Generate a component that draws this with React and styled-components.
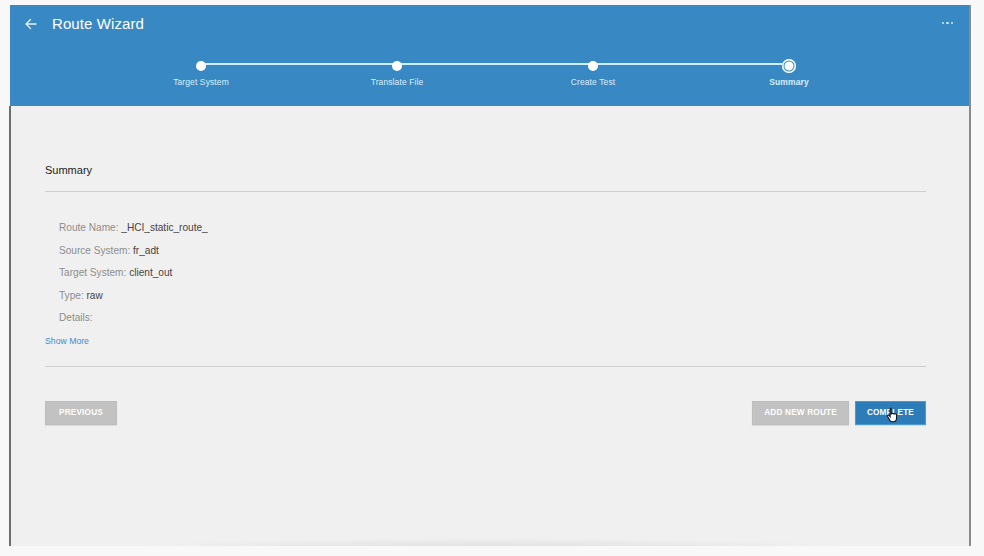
import React from "react";
import styled, { createGlobalStyle } from "styled-components";

const Global = createGlobalStyle`
  html, body { margin: 0; padding: 0; background: #f8f8f8; }
  body { font-family: "Liberation Sans", Arial, sans-serif; }
  * { box-sizing: border-box; }
`;

const Page = styled.div`
  padding: 5px 0 0 9px;
  width: 984px;
  height: 556px;
  overflow: hidden;
`;

const Frame = styled.div`
  width: 962px;
  height: 541px;
  display: flex;
  flex-direction: column;
  border-right: 2px solid #8a8a8a;
`;

const Header = styled.header`
  height: 101px;
  background: #3889c3;
  color: #fff;
  display: flex;
  flex-direction: column;
  margin-left: 1px;
`;

const TopBar = styled.div`
  display: flex;
  align-items: center;
  height: 37px;
  padding: 0 16px 0 14px;
`;

const BackButton = styled.span`
  display: inline-flex;
  width: 14px;
  height: 14px;
  margin-right: 14px;
  margin-top: 1px;
`;

const Title = styled.h1`
  margin: 0;
  font-size: 15px;
  font-weight: 400;
  letter-spacing: 0.1px;
  flex: 1;
`;

const More = styled.span`
  display: inline-flex;
  gap: 2px;
  margin-top: -1px;
  & > i {
    width: 2.5px;
    height: 2.5px;
    border-radius: 50%;
    background: #cfe8f8;
  }
`;

const Stepper = styled.ol`
  position: relative;
  list-style: none;
  margin: 0;
  padding: 0 0 0 93px;
  display: grid;
  grid-template-columns: repeat(4, 196px);
  &::before {
    content: "";
    position: absolute;
    left: 191px;
    width: 588px;
    top: 21px;
    height: 2px;
    background: #cdeefb;
  }
`;

const Step = styled.li`
  display: flex;
  flex-direction: column;
  align-items: center;
  padding-top: 17px;
`;

const Dot = styled.span`
  position: relative;
  z-index: 1;
  width: ${(p) => (p.$current ? 14 : 10)}px;
  height: ${(p) => (p.$current ? 14 : 10)}px;
  margin-top: ${(p) => (p.$current ? 0 : 2)}px;
  margin-bottom: ${(p) => (p.$current ? 0 : 2)}px;
  border-radius: 50%;
  background: #fff;
  box-shadow: ${(p) => (p.$current ? "inset 0 0 0 1.5px #fff, inset 0 0 0 2.5px #3889c3" : "none")};
`;

const StepLabel = styled.span`
  margin-top: 4px;
  font-size: 8.5px;
  color: #dcedf9;
  font-weight: ${(p) => (p.$current ? 700 : 400)};
  letter-spacing: 0.1px;
`;

const Content = styled.main`
  flex: 1;
  background: #f0f0f0;
  border-left: 2px solid #6e6e6e;
  padding: 57px 43px 0 34px;
  display: flex;
  flex-direction: column;
  background-image: radial-gradient(ellipse 360px 8px at 50% 100%, rgba(0,0,0,0.06), rgba(0,0,0,0));
`;

const SectionTitle = styled.h2`
  margin: 0;
  font-size: 11px;
  line-height: 14px;
  font-weight: 400;
  color: #222;
`;

const Rule = styled.hr`
  margin: ${(p) => p.$mt}px 0 0;
  border: 0;
  height: 1px;
  background: #cfcfcf;
`;

const List = styled.dl`
  margin: 25px 0 0 14px;
  display: flex;
  flex-direction: column;
`;

const Item = styled.div`
  font-size: 10.1px;
  line-height: 22.6px;
  color: #8d8d8d;
`;

const Value = styled.span`
  color: #444;
`;

const Link = styled.a`
  margin-top: 4px;
  font-size: 8.7px;
  line-height: 14px;
  color: #3d8ccb;
  cursor: pointer;
`;

const Actions = styled.div`
  margin-top: 34px;
  display: flex;
  align-items: center;
  gap: 6px;
`;

const Spacer = styled.div`
  flex: 1;
`;

const Button = styled.button`
  position: relative;
  height: 24px;
  padding: 0 ${(p) => p.$px}px;
  border: 1px solid ${(p) => (p.$primary ? "#4a98d2" : "#bdbdbd")};
  background: ${(p) => (p.$primary ? "#2b7cb9" : "#c2c2c2")};
  color: #fff;
  font-family: "Liberation Sans", Arial, sans-serif;
  font-size: 8.2px;
  font-weight: 700;
  letter-spacing: 0.2px;
  text-transform: uppercase;
  box-shadow: 0 1px 1px rgba(0,0,0,0.08);
`;

const Cursor = styled.svg`
  position: absolute;
  left: 30px;
  top: 5px;
  width: 14px;
  height: 16px;
`;

const steps = ["Target System", "Translate File", "Create Test", "Summary"];

const details = [
  ["Route Name:", "_HCI_static_route_"],
  ["Source System:", "fr_adt"],
  ["Target System:", "client_out"],
  ["Type:", "raw"],
  ["Details:", ""],
];

export default function App() {
  return (
    <Page>
      <Global />
      <Frame>
        <Header>
          <TopBar>
            <BackButton>
              <svg viewBox="0 0 14 14" width="14" height="14" fill="none" stroke="#e4f1fb" strokeWidth="1.3" strokeLinecap="round" strokeLinejoin="round">
                <path d="M12 7H2M6.5 2.5L2 7l4.5 4.5" />
              </svg>
            </BackButton>
            <Title>Route Wizard</Title>
            <More><i /><i /><i /></More>
          </TopBar>
          <Stepper>
            {steps.map((s, i) => (
              <Step key={s}>
                <Dot $current={i === 3} />
                <StepLabel $current={i === 3}>{s}</StepLabel>
              </Step>
            ))}
          </Stepper>
        </Header>
        <Content>
          <SectionTitle>Summary</SectionTitle>
          <Rule $mt={14} />
          <List>
            {details.map(([k, v]) => (
              <Item key={k}>
                {k} {v && <Value>{v}</Value>}
              </Item>
            ))}
          </List>
          <Link>Show More</Link>
          <Rule $mt={18} />
          <Actions>
            <Button $px={13}>Previous</Button>
            <Spacer />
            <Button $px={11}>Add new route</Button>
            <Button $primary $px={11}>
              Complete
              <Cursor viewBox="0 0 12 14">
                <path d="M3.5 1.2c.6 0 1 .4 1 1V6l.2-.1c.3-.5 1.1-.5 1.4 0l.1.1c.3-.4 1-.4 1.3 0l.1.2c.3-.3 1-.3 1.2.1.2.2.3.5.3.8v2.6c0 1.900-1.4 3.3-3.2 3.3H5.5c-1 0-1.8-.5-2.3-1.3L1.3 8.4c-.3-.5-.1-1 .3-1.2.4-.2.9 0 1.1.3l.8 1.1V2.2c0-.6.4-1 1-1z" fill="#fff" stroke="#111" strokeWidth="0.9" />
              </Cursor>
            </Button>
          </Actions>
        </Content>
      </Frame>
    </Page>
  );
}
